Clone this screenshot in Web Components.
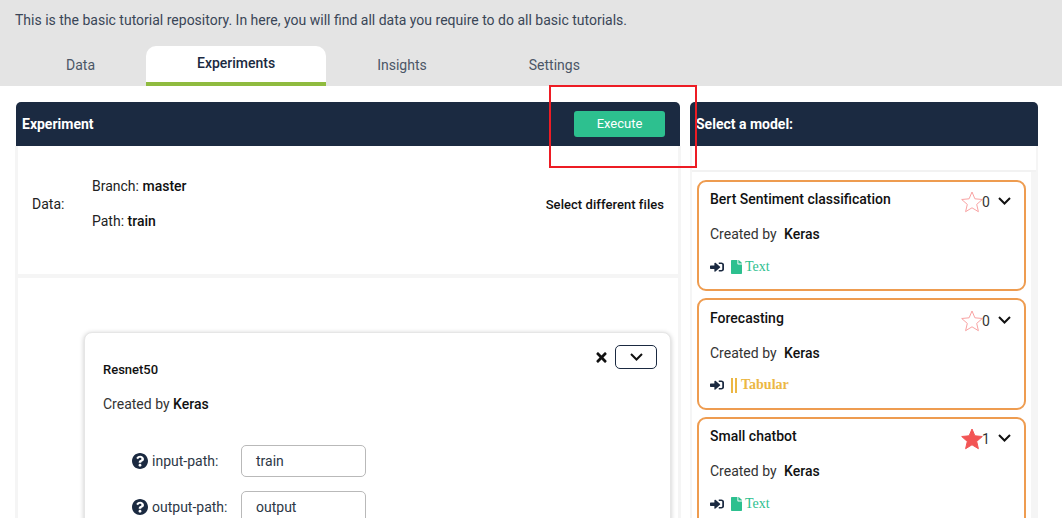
<!DOCTYPE html>
<html>
<head>
<meta charset="utf-8">
<style>
    html, body {
        margin: 0;
        height: 518px;
        overflow: hidden;
        background: #fff;
        font-family: Roboto, "Liberation Sans", sans-serif;
        font-size: 14px;
        color: #1b2a41;
    }
</style>
</head>
<body>
<repo-page>
    <repo-header slot="header" text="This is the basic tutorial repository. In here, you will find all data you require to do all basic tutorials.">
        <repo-tab>Data</repo-tab>
        <repo-tab active>Experiments</repo-tab>
        <repo-tab>Insights</repo-tab>
        <repo-tab>Settings</repo-tab>
    </repo-header>
    <experiment-panel slot="left">
        <code-params slot="params" name="Resnet50" author="Keras">
            <param-row label="input-path" value="train"></param-row>
            <param-row label="output-path" value="output"></param-row>
        </code-params>
    </experiment-panel>
    <model-list slot="right">
        <model-card title="Bert Sentiment classification" stars="0" kind="text"></model-card>
        <model-card title="Forecasting" stars="0" kind="tabular"></model-card>
        <model-card title="Small chatbot" stars="1" kind="text"></model-card>
    </model-list>
</repo-page>

<script>
const chevron = `<svg width="13" height="8" viewBox="0 0 13 8" fill="none" stroke="#111" stroke-width="2"><polyline points="1,1 6.5,6.500 12,1"/></svg>`;

class RepoPage extends HTMLElement {
    constructor () {
        super ();
        this.attachShadow ({mode: "open"}).innerHTML = `
<style>
    :host { display: block; position: relative; height: 518px; overflow: hidden; background: #fff; }
    #main {
        display: flex;
        gap: 10px;
        padding: 16px 24px 0 16px;
        height: 416px;
    }
    #annotation {
        position: absolute;
        left: 549px;
        top: 85px;
        width: 144px;
        height: 79px;
        border: 2px solid #ed1c24;
    }
</style>
<slot name="header"></slot>
<div id="main">
    <slot name="left"></slot>
    <slot name="right"></slot>
</div>
<div id="annotation"></div>`;
    }
}

class RepoHeader extends HTMLElement {
    constructor () {
        super ();
        this.attachShadow ({mode: "open"}).innerHTML = `
<style>
    :host { display: block; background: #e4e4e4; height: 86px; }
    #text { padding: 12px 15px 0; line-height: 17px; height: 17px; color: #3a4657; font-size: 14px; }
    #tabs { display: flex; padding: 17px 0 0 15px; }
</style>
<div id="text"></div>
<div id="tabs"><slot></slot></div>`;
    }
    connectedCallback () {
        this.shadowRoot.getElementById ("text").textContent = this.getAttribute ("text");
    }
}

class RepoTab extends HTMLElement {
    constructor () {
        super ();
        this.attachShadow ({mode: "open"}).innerHTML = `
<style>
    :host {
        display: block;
        box-sizing: border-box;
        height: 40px;
        padding: 11px 51px 0;
        line-height: 17px;
        font-size: 14px;
        color: #4b5666;
    }
    :host([active]) {
        background: #fff;
        border-radius: 10px 10px 0 0;
        border-bottom: 4px solid #8fbb3f;
        padding-top: 9px;
        font-weight: 500;
        color: #1b2a41;
    }
</style>
<slot></slot>`;
    }
}

class PanelHeader extends HTMLElement {
    constructor () {
        super ();
        this.attachShadow ({mode: "open"}).innerHTML = `
<style>
    :host {
        display: flex;
        align-items: center;
        justify-content: space-between;
        box-sizing: border-box;
        height: 44px;
        padding: 0 15px 0 6px;
        background: #1b2a41;
        border-radius: 5px 5px 0 0;
        color: #fff;
        font-weight: 700;
        font-size: 14px;
    }
</style>
<slot></slot>`;
    }
}

class RunButton extends HTMLElement {
    constructor () {
        super ();
        this.attachShadow ({mode: "open"}).innerHTML = `
<style>
    :host {
        display: block;
        width: 91px;
        height: 26px;
        line-height: 26px;
        text-align: center;
        background: #2dc08f;
        border-radius: 3px;
        color: #fff;
        font-weight: 400;
        font-size: 13px;
    }
</style>
<slot></slot>`;
    }
}

class ExperimentPanel extends HTMLElement {
    constructor () {
        super ();
        this.attachShadow ({mode: "open"}).innerHTML = `
<style>
    :host { display: block; width: 664px; flex: none; color: #222; }
    #body {
        border: solid #f5f5f5;
        border-width: 0 2px;
        box-shadow: -1px 0 0 #f5f5f5, 1px 0 0 #f5f5f5;
    }
    #data {
        display: flex;
        align-items: center;
        box-sizing: border-box;
        height: 132px;
        padding: 0 14px;
        background: #fff;
        border-bottom: 4px solid #f5f5f5;
    }
    #data-label { width: 60px; margin-top: -12px; }
    #paths { flex: 1; margin-top: -12px; display: grid; gap: 18px; line-height: 17px; }
    #select { font-weight: 500; font-size: 13px; letter-spacing: .05px; color: #111; margin-top: -12px; }
    b { font-weight: 500; color: #111; }
    #canvas { background: #fff; height: 240px; padding: 54px 7px 0 66px; }
</style>
<panel-header>Experiment<run-button>Execute</run-button></panel-header>
<div id="body">
    <div id="data">
        <div id="data-label">Data:</div>
        <div id="paths">
            <div>Branch: <b>master</b></div>
            <div>Path: <b>train</b></div>
        </div>
        <div id="select">Select different files</div>
    </div>
    <div id="canvas"><slot name="params"></slot></div>
</div>`;
    }
}

class CodeParams extends HTMLElement {
    constructor () {
        super ();
        this.attachShadow ({mode: "open"}).innerHTML = `
<style>
    :host {
        display: block;
        box-sizing: border-box;
        height: 300px;
        padding: 12px 13px 0 18px;
        background: #fff;
        border: 1px solid #e6e6e6;
        border-radius: 8px;
        box-shadow: 0 1px 5px rgba(0,0,0,.22);
    }
    #top { display: flex; justify-content: flex-end; align-items: center; gap: 8px; height: 24px; }
    #close { display: block; }
    #toggle {
        display: flex;
        align-items: center;
        justify-content: center;
        box-sizing: border-box;
        width: 42px;
        height: 24px;
        border: 1px solid #1b2a41;
        border-radius: 5px;
    }
    #name { font-size: 13px; font-weight: 500; line-height: 16px; color: #111; margin-top: -7px; }
    #by { font-size: 14px; line-height: 16px; margin-top: 18px; color: #333; }
    #by b { font-weight: 500; color: #111; }
    #rows { margin-top: 33px; display: grid; gap: 14px; }
</style>
<div id="top">
    <svg id="close" width="11" height="15" viewBox="0 0 352 512" fill="#111"><path d="M242.72 256l100.07-100.07c12.28-12.28 12.28-32.19 0-44.48l-22.24-22.24c-12.28-12.28-32.19-12.28-44.48 0L176 189.28 75.93 89.21c-12.28-12.28-32.19-12.28-44.48 0L9.21 111.45c-12.28 12.28-12.28 32.19 0 44.48L109.28 256 9.21 356.07c-12.28 12.28-12.28 32.19 0 44.48l22.24 22.24c12.28 12.28 32.2 12.28 44.48 0L176 322.72l100.07 100.07c12.28 12.28 32.2 12.28 44.48 0l22.24-22.24c12.28-12.28 12.28-32.19 0-44.48L242.72 256z"/></svg>
    <div id="toggle">${chevron}</div>
</div>
<div id="name"></div>
<div id="by">Created by <b></b></div>
<div id="rows"><slot></slot></div>`;
    }
    connectedCallback () {
        this.shadowRoot.getElementById ("name").textContent = this.getAttribute ("name");
        this.shadowRoot.querySelector ("#by b").textContent = this.getAttribute ("author");
    }
}

class ParamRow extends HTMLElement {
    constructor () {
        super ();
        this.attachShadow ({mode: "open"}).innerHTML = `
<style>
    :host { display: flex; align-items: center; padding-left: 29px; height: 32px; }
    svg { flex: none; margin-right: 4px; }
    #label { width: 89px; font-size: 14px; color: #2c3746; }
    #value {
        box-sizing: border-box;
        width: 125px;
        height: 32px;
        line-height: 30px;
        padding: 0 14px;
        border: 1px solid #b9b9b9;
        border-radius: 5px;
        font-size: 14px;
        color: #2c3746;
    }
</style>
<svg width="16" height="16" viewBox="8 8 496 496" fill="#1b2a41"><path d="M504 256c0 136.997-111.043 248-248 248S8 392.997 8 256C8 119.083 119.043 8 256 8s248 111.083 248 248zM262.655 90c-54.497 0-89.255 22.957-116.549 63.758-3.536 5.286-2.353 12.415 2.715 16.258l34.699 26.31c5.205 3.947 12.621 3.008 16.665-2.122 17.864-22.658 30.113-35.797 57.303-35.797 20.429 0 45.698 13.148 45.698 32.958 0 14.976-12.363 22.667-32.534 33.976C247.128 238.528 216 254.941 216 296v4c0 6.627 5.373 12 12 12h56c6.627 0 12-5.373 12-12v-1.333c0-28.462 83.186-29.647 83.186-106.667 0-58.002-60.165-102-116.531-102zM256 338c-25.365 0-46 20.635-46 46 0 25.364 20.635 46 46 46s46-20.636 46-46c0-25.365-20.635-46-46-46z"/></svg>
<div id="label"></div>
<div id="value"></div>`;
    }
    connectedCallback () {
        this.shadowRoot.getElementById ("label").textContent = this.getAttribute ("label") + ":";
        this.shadowRoot.getElementById ("value").textContent = this.getAttribute ("value");
    }
}

class ModelList extends HTMLElement {
    constructor () {
        super ();
        this.attachShadow ({mode: "open"}).innerHTML = `
<style>
    :host { display: block; width: 348px; flex: none; }
    #body { border: solid #f5f5f5; border-width: 0 2px; }
    #spacer { height: 24px; background: #fff; border-bottom: 2px solid #f2f2f2; }
    #list {
        background: #fff;
        height: 346px;
        padding: 8px 5px 0;
        border-right: 5px solid #f5f5f5;
        display: grid;
        gap: 7px;
        align-content: start;
    }
</style>
<panel-header>Select a model:</panel-header>
<div id="body">
    <div id="spacer"></div>
    <div id="list"><slot></slot></div>
</div>`;
    }
}

class ModelCard extends HTMLElement {
    constructor () {
        super ();
        this.attachShadow ({mode: "open"}).innerHTML = `
<style>
    :host {
        display: block;
        box-sizing: border-box;
        height: 111.400px;
        padding: 9.400px 13px 0 11px;
        border: 2px solid #ee9c50;
        border-radius: 9px;
        background: #fff;
        color: #333;
        font-size: 14px;
    }
    #top { display: flex; align-items: flex-start; height: 33px; }
    #title { flex: 1; font-weight: 500; font-size: 14px; line-height: 17px; color: #111; }
    #star { margin: -1px -2px 0 0; }
    #count { margin-top: 3px; line-height: 17px; width: 16px; }
    #open { margin-top: 6px; }
    #open svg { display: block; }
    #by { line-height: 17px; margin-top: 2px; }
    #by b { font-weight: 500; color: #111; margin-left: 4px; }
    #kind { display: flex; align-items: center; margin-top: 15px; height: 17px; font-family: "Liberation Serif", serif; font-size: 14px; }
    #kind .in { margin-right: 7px; }
    #kind .file { margin-right: 3px; }
    .text { color: #2dc08f; }
    .tabular { color: #ecb744; font-weight: 700; }
    .bars { width: 6px; height: 15px; margin-right: 4px; border-left: 2px solid #ecb744; border-right: 2px solid #ecb744; box-sizing: border-box; }
</style>
<div id="top">
    <div id="title"></div>
    <svg id="star" width="24" height="24" viewBox="0 0 24 24" stroke-linejoin="round"><path d="M12 2 L14.900 8.800 L22.300 9.500 L16.700 14.400 L18.400 21.700 L12 17.800 L5.600 21.700 L7.300 14.400 L1.700 9.500 L9.100 8.800 Z"/></svg>
    <div id="count"></div>
    <div id="open">${chevron}</div>
</div>
<div id="by">Created by <b>Keras</b></div>
<div id="kind"></div>`;
    }
    connectedCallback () {
        const root = this.shadowRoot;
        const stars = this.getAttribute ("stars");
        const star = root.querySelector ("#star path");
        star.setAttribute ("fill", stars > 0 ? "#f25555" : "none");
        star.setAttribute ("stroke", stars > 0 ? "#f25555" : "#f9a3a3");
        root.getElementById ("title").textContent = this.getAttribute ("title");
        root.getElementById ("count").textContent = stars;
        const signIn = `<svg class="in" width="14" height="12" viewBox="0 0 512 512" preserveAspectRatio="none" fill="#1b2a41"><path d="M416 448h-84c-6.600 0-12-5.400-12-12v-40c0-6.600 5.400-12 12-12h84c17.700 0 32-14.300 32-32V160c0-17.700-14.300-32-32-32h-84c-6.600 0-12-5.400-12-12V76c0-6.600 5.400-12 12-12h84c53 0 96 43 96 96v192c0 53-43 96-96 96zm-47-201L201 79c-15-15-41-4.500-41 17v96H24c-13.300 0-24 10.700-24 24v96c0 13.300 10.700 24 24 24h136v96c0 21.500 26 32 41 17l168-168c9.300-9.400 9.300-24.600 0-34z"/></svg>`;
        if (this.getAttribute ("kind") === "text") {
            root.getElementById ("kind").innerHTML = signIn + `<svg class="file" width="11" height="14" viewBox="0 0 384 512" preserveAspectRatio="none" fill="#2dc08f"><path d="M224 136V0H24C10.700 0 0 10.700 0 24v464c0 13.300 10.700 24 24 24h336c13.300 0 24-10.700 24-24V160H248c-13.200 0-24-10.800-24-24zm160-14.100v6.100H256V0h6.100c6.400 0 12.500 2.500 17 7l97.900 98c4.500 4.500 7 10.600 7 16.900z"/></svg><span class="text">Text</span>`;
        } else {
            root.getElementById ("kind").innerHTML = signIn + `<div class="bars"></div><span class="tabular">Tabular</span>`;
        }
    }
}

customElements.define ("repo-page", RepoPage);
customElements.define ("repo-header", RepoHeader);
customElements.define ("repo-tab", RepoTab);
customElements.define ("panel-header", PanelHeader);
customElements.define ("run-button", RunButton);
customElements.define ("experiment-panel", ExperimentPanel);
customElements.define ("code-params", CodeParams);
customElements.define ("param-row", ParamRow);
customElements.define ("model-list", ModelList);
customElements.define ("model-card", ModelCard);
</script>
</body>
</html>
